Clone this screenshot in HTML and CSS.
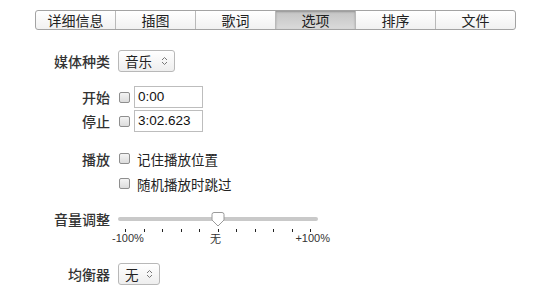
FILE: index.html
```html
<!DOCTYPE html>
<html lang="zh-CN">

<head>
    <meta charset="UTF-8">
    <meta name="viewport" content="width=device-width, initial-scale=1.0">
    <title>选项</title>
    <link rel="stylesheet" href="styles.css">
</head>

<body>
    <nav class="tabs">
        <div class="tab">详细信息</div>
        <div class="tab">插图</div>
        <div class="tab">歌词</div>
        <div class="tab active">选项</div>
        <div class="tab">排序</div>
        <div class="tab">文件</div>
    </nav>

    <section class="form">
        <div class="row media">
            <label class="lbl">媒体种类</label>
            <div class="select">
                <span>音乐</span>
                <svg width="7" height="10" viewBox="0 0 7 10"><path d="M1 4 L3.5 1.5 L6 4 M1 6 L3.5 8.5 L6 6" fill="none" stroke="#777" stroke-width="1"/></svg>
            </div>
        </div>

        <div class="row time start">
            <label class="lbl">开始</label>
            <span class="check"></span>
            <div class="field">0:00</div>
        </div>
        <div class="row time">
            <label class="lbl">停止</label>
            <span class="check"></span>
            <div class="field">3:02.623</div>
        </div>

        <div class="row play first">
            <label class="lbl">播放</label>
            <span class="check"></span>
            <span class="opt">记住播放位置</span>
        </div>
        <div class="row play">
            <label class="lbl"></label>
            <span class="check"></span>
            <span class="opt">随机播放时跳过</span>
        </div>

        <div class="row volume">
            <label class="lbl">音量调整</label>
            <div class="slider">
                <div class="track"></div>
                <svg class="thumb" width="14" height="15" viewBox="0 0 14 15"><path d="M1 2.5 Q1 0.5 3 0.5 L11 0.5 Q13 0.5 13 2.5 L13 8 L7 14 L1 8 Z" fill="#fff" stroke="#9a9a9a" stroke-width="1"/></svg>
            </div>
        </div>
        <div class="ticks">
            <span></span><span></span><span></span><span></span><span></span><span></span>
            <span></span><span></span><span></span><span></span><span></span>
        </div>
        <div class="scale">
            <span>-100%</span>
            <span class="mid">无</span>
            <span>+100%</span>
        </div>

        <div class="row eq">
            <label class="lbl">均衡器</label>
            <div class="select small">
                <span>无</span>
                <svg width="7" height="10" viewBox="0 0 7 10"><path d="M1 4 L3.5 1.5 L6 4 M1 6 L3.5 8.5 L6 6" fill="none" stroke="#777" stroke-width="1"/></svg>
            </div>
        </div>
    </section>
</body>

</html>
```

FILE: styles.css
```css
body {
    margin: 0;
    background: #fff;
    font-family: "Noto Sans CJK SC", "Liberation Sans", sans-serif;
    color: #222;
}

.tabs {
    display: flex;
    margin: 10px 0 0 35px;
    width: 481px;
    height: 20px;
    border: 1px solid #a3a3a3;
    border-radius: 3px;
    background: linear-gradient(#ffffff, #f1f1f1);
    overflow: hidden;
    box-sizing: border-box;
}

.tab {
    flex: 1;
    text-align: center;
    font-size: 14px;
    line-height: 18px;
    border-left: 1px solid #b9b9b9;
}

.tab:first-child {
    border-left: none;
}

.tab.active {
    background: linear-gradient(#c4c4c4, #dadada);
    box-shadow: inset 0 1px 2px rgba(0, 0, 0, 0.25);
}

.form {
    padding-top: 20px;
}

.row {
    display: flex;
    align-items: center;
}

.lbl {
    width: 110px;
    margin-right: 8px;
    text-align: right;
    font-size: 14px;
    color: #333;
    font-weight: 500;
}

.select {
    display: flex;
    align-items: center;
    justify-content: space-between;
    width: 57px;
    height: 22px;
    padding: 0 6px 0 6px;
    box-sizing: border-box;
    border: 1px solid #b8b8b8;
    border-radius: 3px;
    background: linear-gradient(#ffffff, #eeeeee);
    font-size: 13.5px;
}

.select.small {
    width: 42px;
}

.media {
    height: 22px;
}

.time {
    height: 22px;
    margin-top: 2px;
}

.time.start {
    margin-top: 14px;
}

.check {
    width: 9px;
    height: 9px;
    margin-left: 1px;
    border: 1px solid #8e8e8e;
    border-radius: 2px;
    background: linear-gradient(#f4f4f4, #dcdcdc);
}

.field {
    width: 69px;
    height: 22px;
    margin-left: 4px;
    padding-left: 3px;
    box-sizing: border-box;
    border: 1px solid #bdbdbd;
    font-family: "Liberation Sans", sans-serif;
    font-size: 13.5px;
    line-height: 20px;
    color: #111;
}

.play {
    height: 25px;
}

.play.first {
    margin-top: 14px;
}

.opt {
    margin-left: 7px;
    font-size: 13.5px;
}

.volume {
    height: 20px;
    margin-top: 13px;
}

.slider {
    position: relative;
    width: 200px;
    height: 20px;
}

.track {
    margin-top: 8px;
    height: 4px;
    border-radius: 2px;
    background: #c9c9c9;
}

.thumb {
    position: absolute;
    left: 93px;
    top: 3px;
}

.ticks {
    display: flex;
    justify-content: space-between;
    width: 186px;
    margin: 0 0 0 125px;
    height: 3px;
}

.ticks span {
    width: 1px;
    height: 3px;
    background: #222;
}

.scale {
    display: flex;
    justify-content: space-between;
    width: 218px;
    margin-left: 112px;
    font-family: "Liberation Sans", sans-serif;
    font-size: 11px;
    line-height: 13px;
    color: #333;
}

.scale .mid {
    font-family: "Noto Sans CJK SC", sans-serif;
    margin-right: 8px;
}

.eq {
    height: 22px;
    margin-top: 18px;
}
```
